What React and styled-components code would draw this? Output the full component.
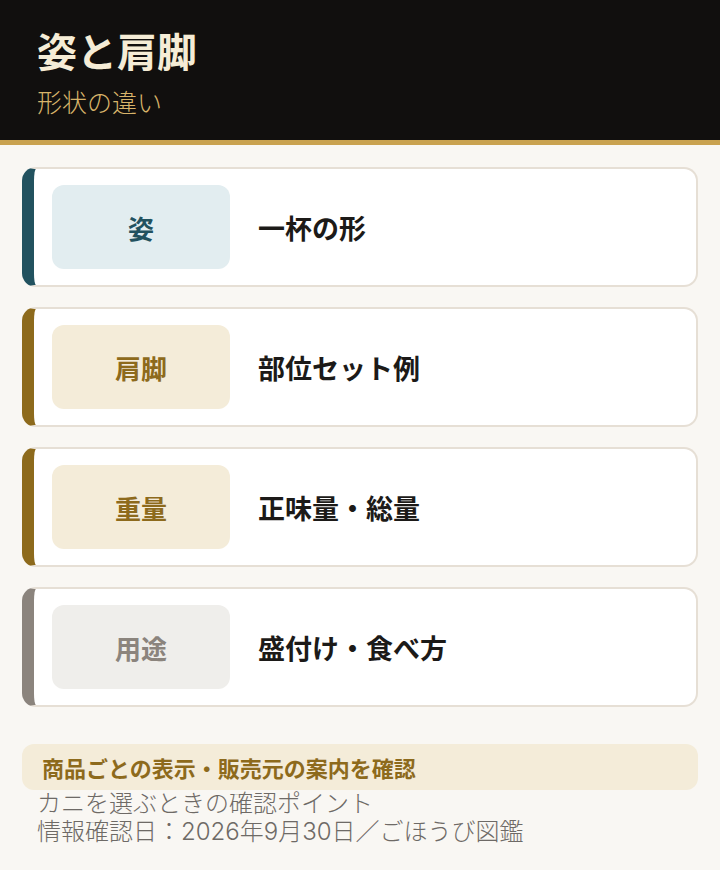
import styled, { createGlobalStyle } from "styled-components";

const GlobalStyle = createGlobalStyle`
  html, body {
    margin: 0;
    padding: 0;
    background: #f9f7f3;
    font-family: "Noto Sans CJK JP", "Noto Sans", sans-serif;
  }
  * { box-sizing: border-box; }
`;

const TONES = {
  teal: { bar: "#22525f", bg: "#e2edf0", fg: "#22525f" },
  gold: { bar: "#8d6a1c", bg: "#f4ecd9", fg: "#8d6a1c" },
  gray: { bar: "#8b847d", bg: "#efeeeb", fg: "#8b847d" },
};

const Page = styled.div`
  min-height: 870px;
  background: #f9f7f3;
`;

const Header = styled.header`
  background: #110f0e;
  border-bottom: 5px solid #c9a24f;
  padding: 24px 37px 21px;
`;

const Title = styled.h1`
  margin: 0;
  font-size: 40px;
  line-height: 52px;
  font-weight: 700;
  color: #f5ecd6;
`;

const Subtitle = styled.p`
  margin: 8px 0 0;
  font-size: 25px;
  line-height: 35px;
  font-weight: 300;
  color: #d8b46a;
`;

const List = styled.div`
  display: flex;
  flex-direction: column;
  gap: 20px;
  padding: 22px 22px 0;
`;

const Card = styled.div`
  display: flex;
  align-items: center;
  gap: 28px;
  background: #fff;
  border: 2px solid #e6dfd5;
  border-left: 12px solid ${p => TONES[p.$tone].bar};
  border-radius: 14px;
  padding: 16px 18px;
`;

const Badge = styled.div`
  width: 178px;
  height: 84px;
  flex-shrink: 0;
  display: flex;
  align-items: center;
  justify-content: center;
  border-radius: 12px;
  background: ${p => TONES[p.$tone].bg};
  color: ${p => TONES[p.$tone].fg};
  font-size: 26px;
  font-weight: 700;
`;

const Label = styled.div`
  font-size: 27px;
  font-weight: 700;
  color: #1c1a18;
`;

const Footer = styled.footer`
  padding: 37px 22px 0;
`;

const Note = styled.div`
  background: #f4ecd9;
  border-radius: 12px;
  padding: 0 20px;
  height: 46px;
  display: flex;
  align-items: center;
  font-size: 22px;
  font-weight: 700;
  color: #8d6a1c;
`;

const Meta = styled.p`
  margin: 0;
  padding-left: 15px;
  font-family: Inter, "Noto Sans CJK JP", sans-serif;
  font-size: 24px;
  line-height: 28px;
  font-weight: 300;
  color: #6e6a66;
`;

const ITEMS = [
  { badge: "姿", label: "一杯の形", tone: "teal" },
  { badge: "肩脚", label: "部位セット例", tone: "gold" },
  { badge: "重量", label: "正味量・総量", tone: "gold" },
  { badge: "用途", label: "盛付け・食べ方", tone: "gray" },
];

export default function App() {
  return (
    <Page>
      <GlobalStyle />
      <Header>
        <Title>姿と肩脚</Title>
        <Subtitle>形状の違い</Subtitle>
      </Header>
      <List>
        {ITEMS.map(item => (
          <Card key={item.badge} $tone={item.tone}>
            <Badge $tone={item.tone}>{item.badge}</Badge>
            <Label>{item.label}</Label>
          </Card>
        ))}
      </List>
      <Footer>
        <Note>商品ごとの表示・販売元の案内を確認</Note>
        <Meta>カニを選ぶときの確認ポイント</Meta>
        <Meta>情報確認日：2026年9月30日／ごほうび図鑑</Meta>
      </Footer>
    </Page>
  );
}
